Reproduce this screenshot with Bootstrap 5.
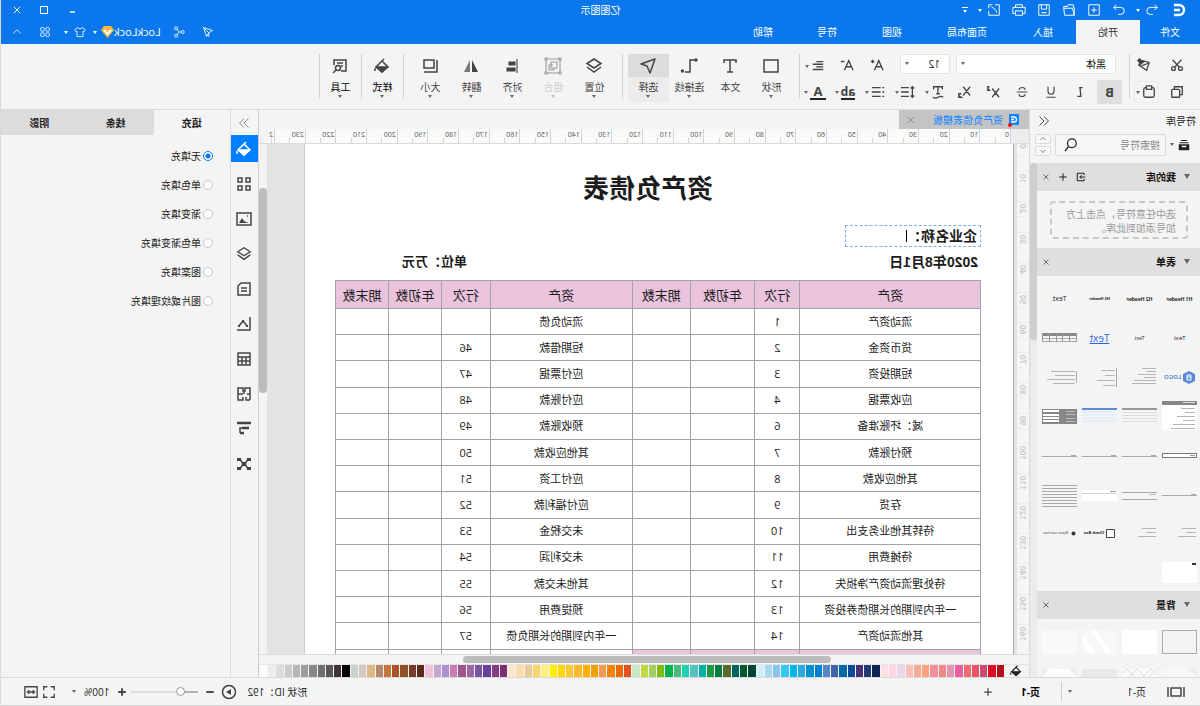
<!DOCTYPE html>
<html lang="zh-CN">
<head>
<meta charset="utf-8">
<meta name="viewport" content="width=device-width, initial-scale=1">
<title>亿图图示</title>
<link rel="stylesheet" href="https://cdn.jsdelivr.net/npm/bootstrap@5.3.0/dist/css/bootstrap.min.css">
<style>
:root{--blue:#0a78ec;--bg:#f4f4f4;--line:#dadada;--head:#dfdfdf;--ink:#444}
body{font:10px/14px "Open Sans","Noto Sans CJK SC",sans-serif;color:#222;background:var(--bg);overflow:hidden}
/* the whole window is shown as a mirror image */
.app{height:100vh;transform:scaleX(-1);background:var(--bg);border-right:1px solid var(--line);border-bottom:1px solid var(--line)}
button,input,select{font:inherit;color:inherit}
.ib{border:0;background:none;padding:0;display:inline-flex;align-items:center;justify-content:center;flex:none;color:inherit}
svg{flex:none;display:block}
.ic{width:16px;height:16px;fill:none;stroke:currentColor;stroke-width:1.5}
.s14{width:14px;height:14px}.s12{width:12px;height:12px}.s18{width:18px;height:18px}
.s10{width:10px;height:10px}.s8{width:8px;height:8px}
.thin{stroke-width:1.1}
.crt{width:0;height:0;border:2px solid transparent;border-top:3px solid #666;border-bottom:0;flex:none}
.top{background:var(--blue);color:#fff}
.top .crt{border-top-color:#fff}
.bar1{height:20px;display:grid;grid-template-columns:1fr auto 1fr}
.bar2{height:24px}
.w25{width:25px}.w29{width:29px}.w30{width:30px}
.mtab{color:#fff;text-decoration:none;line-height:24px;height:24px;padding:0;text-align:center}
.mtab.on{background:var(--bg);color:#333}
.user{font-size:11px}
.ribbon{height:66px;border-bottom:1px solid var(--line);color:var(--ink);padding-top:10px}
.sep{width:1px;height:45px;background:#d2d2d2;flex:none}
.fsel{height:20px;border:1px solid #e2e2e2;border-radius:2px;background:#fff;padding:0 9px;appearance:none;width:100%;color:#111}
.selw{position:relative}
.selw .crt{position:absolute;right:5px;top:8px}
.cell{height:24px}
.cell .crt{margin-left:2px}
.ab24{width:25px;background:#dedede;border-radius:2px}
.paste{width:25px;border:1px solid #ececec;border-radius:2px}
.big{width:41px;height:48px;flex-direction:column;justify-content:flex-start}
.big .pic{width:39px;height:23px;display:flex;align-items:center;justify-content:center}
.big .lb{line-height:14px;margin-top:3px}
.big .crt{margin-top:1px}
.big.on{background:#ececec;border-radius:2px}.big.on .pic{background:#dcdcdc;width:100%}
.big:disabled .lb{color:#ccc}.big:disabled{color:#999}.big:disabled .crt{border-top-color:#bbb}
.lib{width:170px;flex:none}
.libscroll{overflow:hidden;min-height:0}
.sechead{background:var(--head);height:28px;font-weight:700;color:#111;padding:0 5px 0 10px}
.tri{width:0;height:0;border:3px solid transparent;border-top:5px solid #666;border-bottom:0}
.drop{border:2px dashed #c8c8c8;border-radius:3px;height:38px;margin:10px 13px 9px 12px;padding:4px 0 0 10px;color:#999;line-height:14px}
.srch{height:22px;border:1px solid var(--line);border-radius:2px;background:#f7f7f7}
.srch input{border:0;background:none;outline:0;width:100%;padding:0 0 0 5px}
.srch input::placeholder{color:#888}
.updn{width:16px;height:10px;border:1px solid var(--line);border-radius:2px;background:#f8f8f8}
.thumbs{display:grid;grid-template-columns:repeat(4,35px);column-gap:5px;grid-auto-rows:39px;padding:4px 0 0 3px;height:315px}
.thumbs>div{display:flex;align-items:center;justify-content:center;white-space:nowrap;color:#222;font-size:6px}
.bgs{display:grid;grid-template-columns:repeat(4,35px);gap:15px 5px;grid-auto-rows:24px;padding:11px 0 0 3px}
.bgs svg{width:35px;height:24px}
.sb{width:7px;background:#ebebeb;flex:none}.sb div{height:177px;background:#cfcfcf;border-radius:3px}
.center{border-left:1px solid var(--line);border-right:1px solid #ccc;min-width:0}
.dtab{width:130px;height:19px;background:#c4c4c4;color:#0a84ff}
.dicon{position:relative;width:10px;height:11px;margin-right:6px}
.dicon i{position:absolute;left:7px;bottom:-2px;width:4px;height:4px;border-radius:50%;background:#f00}
.hrow{height:15px;border-bottom:1px solid var(--line)}
.hr{display:grid;grid-template-columns:repeat(24,1fr) 7px;font:7px/12px "Open Sans",sans-serif;color:#555;background:#fafafa;overflow:hidden}
.hr span{border-left:1px solid #d4d4d4;padding-left:1px;background:linear-gradient(#d4d4d4,#d4d4d4) 50% 100%/1px 5px no-repeat;overflow:hidden}
.vr{width:14px;display:grid;grid-template-rows:repeat(17,1fr);font:8px/12px "Open Sans",sans-serif;color:#333;background:#fafafa;margin-top:-3px}
.vr span{border-top:1px solid #d4d4d4;background:linear-gradient(#d4d4d4,#d4d4d4) 100% 50%/6px 1px no-repeat;display:flex;align-items:flex-start;min-height:0}
.vr b{font-weight:600;writing-mode:vertical-rl;transform:rotate(180deg);padding-bottom:2px}
.desk{background:#e3e3e3;padding:0 37px 0 3px;overflow:hidden;min-width:0}
.paper{background:#fff;border-left:1px solid #aaa;border-right:1px solid #ccc;padding:29px 30px 0 32px;height:100%;color:#1c1c1c}
.paper h1{font:700 26px/32px "Liberation Sans","Noto Sans CJK SC",sans-serif;padding-left:20px;margin:0 0 20px}
.co{border:1px dashed #7fb0e6;width:136px;height:22px;font-size:14px;font-weight:700;padding-left:3px}
.co i{width:1px;height:12px;background:#000}
.meta{font:700 14px/20px "Liberation Sans","Noto Sans CJK SC",sans-serif;margin:5px 0 8px;padding:0 67px 0 3px}
.meta .unit{font-size:13px}
.sheet{width:100%;height:396px;table-layout:fixed;border-collapse:collapse;font-size:11px;line-height:14px;text-align:center}
.sheet th,.sheet td{border:1px solid #a3a3a3;padding:0}
.sheet td{height:26px}
.sheet th{height:28px;background:#eac3dc;font-size:13px;font-weight:400}
.sheet .pk{background:#eac3dc}
.vs{width:9px;background:#f4f4f4;padding-top:44px}.vs div{width:8px;height:205px;background:#bcbcbc;border-radius:4px}
.hs{height:11px;border-top:1px solid var(--line);border-bottom:1px solid #e6e6e6;padding:1px 204px 1px 198px}.hs div{height:7px;background:#bcbcbc;border-radius:4px}
.pal{height:12px}
.pal .sw{flex:1;margin-right:1px;height:12px}
.tools{width:28px;flex:none;border-right:1px solid var(--line);color:#444}
.tools .ib{height:27px;width:100%;margin-bottom:8px}
.tools .fold{height:25px;margin:0;color:#777}
.tools .on{background:#0080ff;color:#fff}
.props{width:229px;flex:none}
.ptab{flex:1;border:0;background:#dcdcdc;height:25px;padding:0;font-weight:600}
.ptab.on{background:var(--bg);font-weight:700}
.rad{height:29px;gap:2px}
.rad input{appearance:none;width:10px;height:10px;border:1px solid #c4c4c4;border-radius:50%;background:#fff;margin:0}
.rad input:checked{border-color:#0a78ec;background:radial-gradient(#0a78ec 0 2px,#fff 3px)}
.stat{height:28px;border-top:1px solid var(--line);color:#222}
.stat .ic{color:#444}
.zoomr{appearance:none;width:67px;height:10px;background:linear-gradient(90deg,#b4b4b4 0 25%,#ddd 25%) center/100% 2px no-repeat;margin:0}
.zoomr::-webkit-slider-thumb{appearance:none;width:9px;height:9px;border-radius:50%;border:1px solid #999;background:#fff}
</style>
</head>
<body>
<svg width="0" height="0" class="position-absolute" aria-hidden="true"><defs>
<symbol id="undo" viewBox="0 0 16 16"><path d="M5 2 2 5l3 3M2 5h8a4 4 0 0 1 0 8H7"/></symbol>
<symbol id="redo" viewBox="0 0 16 16"><path d="m11 2 3 3-3 3M14 5H6a4 4 0 0 0 0 8h3"/></symbol>
<symbol id="new" viewBox="0 0 16 16"><path d="M2 2h12v12H2zM8 5v6M5 8h6"/></symbol>
<symbol id="open" viewBox="0 0 16 16"><path d="M2 14V5h1V2h6l1 2h4v2M2 14h11l1-8H4z"/></symbol>
<symbol id="save" viewBox="0 0 16 16"><path d="M2 2h12v12H2zM5 2v5h6V2M5 11h6"/></symbol>
<symbol id="print" viewBox="0 0 16 16"><path d="M4 5V2h8v3M4 12H1V5h14v7h-3M4 9h8v5H4z"/></symbol>
<symbol id="export" viewBox="0 0 16 16"><path d="M7 2H2v12h12V9M10 2h4v4M5 11c0-4 3-4 6-7"/></symbol>
<symbol id="send" viewBox="0 0 16 16"><path d="m2 6 12-4-4 12-3-5zM14 2 7 9v5l2-2"/></symbol>
<symbol id="share" viewBox="0 0 16 16"><circle cx="3" cy="8" r="2"/><circle cx="12" cy="3" r="2"/><circle cx="12" cy="13" r="2"/><path d="M5 8h3l2.500-4M8 8l2.500 4"/></symbol>
<symbol id="shirt" viewBox="0 0 16 16"><path d="M5 2 1 5l2 3 1-1v7h8V7l1 1 2-3-4-3c-1 2-5 2-6 0z"/></symbol>
<symbol id="clover" viewBox="0 0 16 16"><rect x="2" y="2" width="5" height="5" rx="2"/><rect x="9" y="2" width="5" height="5" rx="2"/><rect x="2" y="9" width="5" height="5" rx="2"/><rect x="9" y="9" width="5" height="5" rx="2"/></symbol>
<symbol id="up" viewBox="0 0 16 16"><path d="m3 10 5-5 5 5"/></symbol>
<symbol id="down" viewBox="0 0 16 16"><path d="m3 6 5 5 5-5"/></symbol>
<symbol id="x" viewBox="0 0 16 16"><path d="m3 3 10 10M13 3 3 13"/></symbol>
<symbol id="plus" viewBox="0 0 16 16"><path d="M8 2v12M2 8h12"/></symbol>
<symbol id="minus" viewBox="0 0 16 16"><path d="M2 8h12"/></symbol>
<symbol id="dbl" viewBox="0 0 16 16"><path d="M8 2 2 8l6 6M14 2 8 8l6 6"/></symbol>
<symbol id="dbr" viewBox="0 0 16 16"><path d="m2 2 6 6-6 6M8 2l6 6-6 6"/></symbol>
<symbol id="cut" viewBox="0 0 16 16"><circle cx="4" cy="12" r="2.200"/><circle cx="12" cy="12" r="2.200"/><path d="m3 2 7.500 8.500M13 2l-7.500 8.500"/></symbol>
<symbol id="brush" viewBox="0 0 16 16"><path d="m2 5 3 9 9-6-4-5z"/><path d="m8 4 3-1 2-2 2 2-2 2v3z" fill="currentColor"/><path d="m3 6 8 3" /></symbol>
<symbol id="copy" viewBox="0 0 16 16"><path d="M11 5V2H2v9h3"/><rect x="5" y="5" width="9" height="9" rx="1"/></symbol>
<symbol id="paste" viewBox="0 0 16 16"><rect x="2" y="3" width="12" height="11" rx="2"/><path d="M5 1h6v4H5z" fill="#f4f4f4"/></symbol>
<symbol id="italic" viewBox="0 0 16 16"><path d="M5 3h4M8 3l-1 10h4"/></symbol>
<symbol id="under" viewBox="0 0 16 16"><path d="M4 1v6a4 4 0 0 0 8 0V1M2 15h12"/></symbol>
<symbol id="strike" viewBox="0 0 16 16"><path d="M12 5c-1-4-8-4-8 0M1 8h14M4 11c0 4 8 4 8 0"/></symbol>
<symbol id="sup" viewBox="0 0 16 16"><path d="m1 4 8 10M9 4 1 14M12 2h2v2l-2 2h3" /></symbol>
<symbol id="sub" viewBox="0 0 16 16"><path d="m1 2 8 10M9 2 1 12M11 10h3v2l-3 2h4"/></symbol>
<symbol id="tt" viewBox="0 0 16 16"><path d="M3 5V2h10v3M8 2v8M6 10h4M2 14q3-2 6 0t6 0"/></symbol>
<symbol id="lsp" viewBox="0 0 16 16"><path d="M3 2v12M1 4l2-2 2 2M1 12l2 2 2-2M7 3h9M7 8h9M7 13h9"/></symbol>
<symbol id="bul" viewBox="0 0 16 16"><path d="M1 3h2M1 8h2M1 13h2M5 3h10M5 8h10M5 13h10"/></symbol>
<symbol id="align" viewBox="0 0 16 16"><path d="M2 3h8M2 6h12M2 9h8M2 12h12"/></symbol>
<symbol id="aup" viewBox="0 0 16 16"><path d="M1 14 6 3l5 11M3 10h6M11 4h4M13 2v4"/></symbol>
<symbol id="adn" viewBox="0 0 16 16"><path d="M1 14 6 3l5 11M3 10h6M11 4h4"/></symbol>
<symbol id="rect" viewBox="0 0 18 18"><path d="M2 3h14v12H2z"/></symbol>
<symbol id="text" viewBox="0 0 18 18"><path d="M3 6V3h12v3M9 3v12M6 15h6"/></symbol>
<symbol id="conn" viewBox="0 0 18 18"><path d="M2 3h6v12h5"/><circle cx="2" cy="3" r="1.700" fill="currentColor" stroke="none"/><circle cx="15.500" cy="14" r="1.700" fill="currentColor" stroke="none"/></symbol>
<symbol id="pick" viewBox="0 0 18 18"><path d="m2 2 14 5-6 2-3 7z" stroke-linejoin="round"/></symbol>
<symbol id="layers" viewBox="0 0 18 18"><path d="m9 2 7 4.500L9 11 2 6.500zM2 10l7 5 7-5"/></symbol>
<symbol id="group" viewBox="0 0 18 18"><path d="M2 2h14v14H2zM5 5h6v6H5zM9 8h4v5H8v-2"/><path d="M1 1h2v2H1zM15 1h2v2h-2zM1 15h2v2H1zM15 15h2v2h-2z" fill="#f4f4f4"/></symbol>
<symbol id="al" viewBox="0 0 18 18"><path d="M4 2v14"/><path d="M6 5h6v3H6zM6 11h8v3H6z" fill="currentColor"/></symbol>
<symbol id="flip" viewBox="0 0 18 18"><path d="M8 3v12H2z" fill="currentColor" stroke="none"/><path d="M10 3v12h6z" fill="#777" stroke="none"/></symbol>
<symbol id="size" viewBox="0 0 18 18"><path d="M5 3h10v8H5zM2 3v12h13"/></symbol>
<symbol id="fill" viewBox="0 0 16 16"><path d="m8 3 6 6-6 5-6-5zM8 3 6 1"/><path d="M3 9h10l-5 5z" fill="currentColor"/><path d="M15 10v3"/></symbol>
<symbol id="toolb" viewBox="0 0 16 16"><path d="M14 7V2H2v11h5M5 5h6M5 8h2"/><circle cx="10" cy="10" r="2.500"/><path d="m12 12 3 3"/></symbol>
<symbol id="shelf" viewBox="0 0 16 16"><path d="M1 7h14v8H1z" fill="currentColor" stroke="none"/><path d="M2 5h12M4 2h8"/><path d="M5 9h6v2H5z" fill="#fff" stroke="none"/></symbol>
<symbol id="mag" viewBox="0 0 16 16"><circle cx="7" cy="6" r="5"/><path d="m11 10 4 5"/></symbol>
<symbol id="imp" viewBox="0 0 16 16"><path d="M3 5V2h11v12H3v-3M1 8h9M7 5l3 3-3 3"/></symbol>
<symbol id="grid4" viewBox="0 0 16 16"><path d="M2 2h4v4H2zM10 2h4v4h-4zM2 10h4v4H2zM10 10h4v4h-4z"/></symbol>
<symbol id="img" viewBox="0 0 16 16"><path d="M1 2h14v12H1z"/><path d="m3 12 3-1 2-1 2-3 3 5z" fill="currentColor" stroke="none"/><path d="M4 5h1"/></symbol>
<symbol id="doc" viewBox="0 0 16 16"><path d="M2 2h9l3 3v9H2zM5 7h6M5 10h6"/></symbol>
<symbol id="chart" viewBox="0 0 16 16"><path d="M2 1v13h13M5 10l4-5 4 5"/><path d="M8 4h2v2H8zM4 9h2v2H4zM12 9h2v2h-2z" fill="currentColor" stroke="none"/></symbol>
<symbol id="tbl" viewBox="0 0 16 16"><path d="M2 2h12v12H2zM2 6h12M2 10h12M6 6v8M10 6v8"/></symbol>
<symbol id="puz" viewBox="0 0 16 16"><path d="M2 14V2h5v3h2V2h5v12H9v-3M2 14h4v-3M2 8h3M9 8h5M8 5v3"/></symbol>
<symbol id="gantt" viewBox="0 0 16 16"><path d="M1 2h14" stroke-width="2.500"/><path d="M3 7h7M8 12h4" stroke-width="2.500"/><path d="M12 12V7h-2"/></symbol>
<symbol id="mind" viewBox="0 0 16 16"><path d="M6 8h4M4 3l3 5-3 5M12 3 9 8l3 5"/><path d="M1 2h4v3H1zM11 2h4v3h-4zM1 11h4v3H1zM11 11h4v3h-4zM6 6h4v4H6z" fill="currentColor" stroke="none"/></symbol>
<symbol id="pages" viewBox="0 0 18 12"><path d="M1 1v10M17 1v10M4 2h10v8H4z"/></symbol>
<symbol id="play" viewBox="0 0 16 16"><circle cx="8" cy="8" r="6.500"/><path d="m6 5 5 3-5 3z" fill="currentColor" stroke="none"/></symbol>
<symbol id="full" viewBox="0 0 16 16"><path d="M2 6V2h4M10 2h4v4M14 10v4h-4M6 14H2v-4"/></symbol>
<symbol id="fit" viewBox="0 0 16 16"><path d="M1 2h14v12H1zM4 8h8M6 6 4 8l2 2M10 6l2 2-2 2"/></symbol>
</defs></svg>

<div class="app d-flex flex-column">
<header class="top flex-shrink-0">
  <div class="bar1">
    <div class="d-flex align-items-center" style="padding-left:14px">
      <svg width="13" height="14" viewBox="0 0 13 14" fill="none" stroke="#fff" stroke-width="2.500"><path d="M12 2H7a5 5 0 0 0 0 10h5M6 7h6"/></svg>
      <button class="ib w25 ms-2" aria-label="撤销"><svg class="ic thin s14"><use href="#undo"/></svg></button><span class="crt"></span>
      <button class="ib w25 ms-1" aria-label="重做"><svg class="ic thin s14"><use href="#redo"/></svg></button>
      <button class="ib w25" aria-label="新建"><svg class="ic thin s14"><use href="#new"/></svg></button>
      <button class="ib w25" aria-label="打开"><svg class="ic thin s14"><use href="#open"/></svg></button>
      <button class="ib w25" aria-label="保存"><svg class="ic thin s14"><use href="#save"/></svg></button>
      <button class="ib w25" aria-label="打印"><svg class="ic thin s14"><use href="#print"/></svg></button>
      <button class="ib w25" aria-label="导出"><svg class="ic thin s14"><use href="#export"/></svg></button><span class="crt"></span>
      <button class="ib w25" aria-label="更多"><svg width="6" height="7" viewBox="0 0 6 7"><path d="M0 0h6v1H0zM1 3h4L3 6z" fill="#fff"/></svg></button>
    </div>
    <div class="align-self-center">亿图图示</div>
    <div class="d-flex align-items-center justify-content-end pe-1">
      <button class="ib w29" aria-label="最小化"><svg class="ic s12"><path d="M4 8h5"/></svg></button>
      <button class="ib w29" aria-label="最大化"><svg width="8" height="8"><path d="M.5.5h7v7h-7z" fill="none" stroke="#fff"/></svg></button>
      <button class="ib w25" aria-label="关闭"><svg class="ic s10"><use href="#x"/></svg></button>
    </div>
  </div>
  <div class="bar2 d-flex align-items-center">
    <nav class="d-flex">
      <a class="mtab" href="#" style="width:60px">文件</a><a class="mtab on" href="#" style="width:64px">开始</a><a class="mtab" href="#" style="width:66px">插入</a><a class="mtab" href="#" style="width:86px">页面布局</a><a class="mtab" href="#" style="width:64px">视图</a><a class="mtab" href="#" style="width:66px">符号</a><a class="mtab" href="#" style="width:62px">帮助</a>
    </nav>
    <div class="d-flex align-items-center ms-auto pe-1" style="height:20px">
      <button class="ib w29" aria-label="发送"><svg class="ic thin s12"><use href="#send"/></svg></button>
      <button class="ib w29" aria-label="分享"><svg class="ic thin s12"><use href="#share"/></svg></button>
      <a href="#" class="user text-white text-decoration-none ms-1">LockLock</a>
      <svg width="13" height="12" viewBox="0 0 13 12"><path d="M3 0h7l3 4-6.500 8L0 4z" fill="#fdb640"/><path d="m3 4 3.500 4L10 4" stroke="#fff" stroke-width="2" fill="none"/></svg>
      <span class="crt ms-1"></span>
      <button class="ib w25" aria-label="主题"><svg class="ic thin s12"><use href="#shirt"/></svg></button><span class="crt"></span>
      <button class="ib w30 ms-1" aria-label="应用"><svg class="ic thin s12"><use href="#clover"/></svg></button>
      <button class="ib w25" aria-label="收起"><svg class="ic thin s12"><use href="#up"/></svg></button>
    </div>
  </div>
</header>

<div class="ribbon d-flex flex-shrink-0">
  <div style="width:70px;padding-left:8px">
    <div class="d-flex" style="height:22px"><button class="ib w29" aria-label="剪切"><svg class="ic s14"><use href="#cut"/></svg></button><button class="ib ms-1 w29" aria-label="格式刷"><svg class="ic s14"><use href="#brush"/></svg></button></div>
    <div class="d-flex align-items-center mt-1 cell"><button class="ib w29" aria-label="复制"><svg class="ic s14"><use href="#copy"/></svg></button><button class="ib ms-1 paste" style="height:22px" aria-label="粘贴"><svg class="ic s14"><use href="#paste"/></svg><span class="crt"></span></button></div>
  </div>
  <span class="sep"></span>
  <div style="width:329px;padding-left:5px">
    <div class="d-flex ps-2" style="height:22px">
      <div class="selw" style="width:160px"><select class="fsel" aria-label="字体"><option>黑体</option></select><span class="crt"></span></div>
      <div class="selw" style="width:50px;margin-left:6px"><select class="fsel" aria-label="字号"><option>12</option></select><span class="crt"></span></div>
      <button class="ib w30 ms-2" aria-label="增大字号"><svg class="ic s14"><use href="#aup"/></svg></button><button class="ib w30" aria-label="减小字号"><svg class="ic s14"><use href="#adn"/></svg></button>
      <button class="ib cell w30 ms-auto" aria-label="对齐"><svg class="ic s14"><use href="#align"/></svg><span class="crt"></span></button>
    </div>
    <div class="d-flex mt-1">
      <span class="w29 d-flex justify-content-center"><button class="ib cell ab24 fw-bold" style="font-size:13px">B</button></span><button class="ib cell w29" aria-label="斜体"><svg class="ic s14"><use href="#italic"/></svg></button><button class="ib cell w29" aria-label="下划线"><svg class="ic s12"><use href="#under"/></svg></button><button class="ib cell w29" aria-label="删除线"><svg class="ic s12"><use href="#strike"/></svg></button><button class="ib cell w29" aria-label="上标"><svg class="ic s14"><use href="#sup"/></svg></button><button class="ib cell w29" aria-label="下标"><svg class="ic s14"><use href="#sub"/></svg></button>
      <button class="ib cell w30" aria-label="大小写"><svg class="ic s14"><use href="#tt"/></svg><span class="crt"></span></button><button class="ib cell w30" aria-label="行距"><svg class="ic s14"><use href="#lsp"/></svg><span class="crt"></span></button><button class="ib cell w30" aria-label="项目符号"><svg class="ic s14"><use href="#bul"/></svg><span class="crt"></span></button>
      <button class="ib cell w30"><span class="fw-bold border-bottom border-2 border-dark" style="font-size:12px;line-height:13px">ab</span><span class="crt"></span></button><button class="ib cell w30"><span class="fw-bold border-bottom border-2 border-dark px-1" style="font-size:13px;line-height:13px">A</span><span class="crt"></span></button>
    </div>
  </div>
  <span class="sep"></span>
  <div class="d-flex" style="padding:0 5px 0 7px">
    <button class="ib big"><span class="pic"><svg class="ic s18"><use href="#rect"/></svg></span><span class="lb">形状</span><span class="crt"></span></button>
    <button class="ib big"><span class="pic"><svg class="ic s18"><use href="#text"/></svg></span><span class="lb">文本</span></button>
    <button class="ib big"><span class="pic"><svg class="ic s18"><use href="#conn"/></svg></span><span class="lb">连接线</span><span class="crt"></span></button>
    <button class="ib big on"><span class="pic"><svg class="ic s18"><use href="#pick"/></svg></span><span class="lb">选择</span><span class="crt"></span></button>
  </div>
  <span class="sep"></span>
  <div class="d-flex" style="padding:0 6px 0 7px">
    <button class="ib big"><span class="pic"><svg class="ic s18"><use href="#layers"/></svg></span><span class="lb">位置</span><span class="crt"></span></button>
    <button class="ib big" disabled><span class="pic"><svg class="ic thin s18"><use href="#group"/></svg></span><span class="lb">组合</span><span class="crt"></span></button>
    <button class="ib big"><span class="pic"><svg class="ic thin s18"><use href="#al"/></svg></span><span class="lb">对齐</span><span class="crt"></span></button>
    <button class="ib big"><span class="pic"><svg class="ic s18"><use href="#flip"/></svg></span><span class="lb">翻转</span><span class="crt"></span></button>
    <button class="ib big"><span class="pic"><svg class="ic s18"><use href="#size"/></svg></span><span class="lb">大小</span><span class="crt"></span></button>
  </div>
  <span class="sep"></span>
  <button class="ib big"><span class="pic"><svg class="ic"><use href="#fill"/></svg></span><span class="lb text-black">样式</span><span class="crt"></span></button>
  <span class="sep"></span>
  <button class="ib big"><span class="pic"><svg class="ic"><use href="#toolb"/></svg></span><span class="lb text-black">工具</span><span class="crt"></span></button>
  <span class="sep"></span>
</div>

<div class="d-flex flex-grow-1" style="min-height:0">
  <aside class="lib d-flex flex-column">
    <div class="d-flex align-items-center justify-content-between ps-1" style="height:22px;padding-right:8px"><span>符号库</span><button class="ib" aria-label="收起"><svg class="ic thin s12"><use href="#dbl"/></svg></button></div>
    <div class="d-flex align-items-center" style="height:32px;padding:0 5px 4px 10px">
      <svg class="ic s12"><use href="#shelf"/></svg><span class="crt mx-1"></span>
      <div class="srch d-flex align-items-center flex-grow-1 pe-2" style="min-width:0"><input aria-label="搜索符号" placeholder="搜索符号"><svg class="ic s14"><use href="#mag"/></svg></div>
      <div class="d-flex flex-column ms-1" style="gap:2px"><button class="ib updn" aria-label="上一个"><svg class="ic thin s8"><use href="#up"/></svg></button><button class="ib updn" aria-label="下一个"><svg class="ic thin s8"><use href="#down"/></svg></button></div>
    </div>
    <div class="d-flex flex-grow-1" style="min-height:0">
      <div class="libscroll flex-grow-1">
        <div class="sechead d-flex align-items-center gap-2"><span class="tri"></span><span class="me-auto">我的库</span><svg class="ic s10"><use href="#imp"/></svg><svg class="ic s10"><use href="#plus"/></svg><svg class="ic thin s8"><use href="#x"/></svg></div>
        <div class="drop">选中任意符号，点击上方<br>加号添加到此库。</div>
        <div class="sechead d-flex align-items-center gap-2"><span class="tri"></span><span class="me-auto">表单</span><svg class="ic thin s8"><use href="#x"/></svg></div>
        <div class="thumbs" id="thumbs">
          <div class="fw-bold" style="font-size:5px">H1 Header</div><div class="fw-bold" style="font-size:5px">H2 Header</div><div class="fw-bold" style="font-size:4px">H3 Header</div><div style="font-size:7px">Text</div>
          <div>Text</div><div style="font-size:5px">Text</div><div style="font-size:10px;color:#2a62f0;text-decoration:underline">Text</div><div data-t="table"></div>
          <div style="color:#5b8bd8;font-size:6px;font-weight:700"><svg width="12" height="13" viewBox="0 0 12 13"><path d="m6 0 6 3v7l-6 3-6-3V3z" fill="#5b8bd8"/><path d="M4 4h4v5H4zM4 6h4" stroke="#fff" fill="none"/></svg>&nbsp;LOGO</div><div data-t="lines6"></div><div data-t="lines4"></div><div data-t="cols"></div>
          <div data-t="form"></div><div data-t="strip"></div><div data-t="bstrip"></div><div data-t="dark"></div>
          <div data-t="field"></div><div data-t="rule"></div><div data-t="rule"></div><div data-t="rule"></div>
          <div data-t="rule"></div><div data-t="rule2"></div><div data-t="card"></div><div data-t="ruled"></div>
          <div data-t="lines3"></div><div data-t="lines3"></div><div class="fw-bold" style="font-size:4px;gap:2px"><svg width="9" height="9"><path d="M.5.5h8v8h-8z" fill="#fff" stroke="#444"/></svg>Check Box</div><div style="font-size:3px;gap:3px"><svg width="5" height="5"><circle cx="2.500" cy="2.500" r="2" fill="#333"/></svg>Report cover here</div>
          <div data-t="blank"></div>
        </div>
        <div class="sechead d-flex align-items-center gap-2"><span class="tri"></span><span class="me-auto">背景</span><svg class="ic thin s8"><use href="#x"/></svg></div>
        <div class="bgs">
          <svg viewBox="0 0 35 24"><path d="M.5.5h34v23H.5z" fill="#f3f3f3" stroke="#aaa"/></svg><svg viewBox="0 0 35 24"><path d="M0 0h35v24H0z" fill="#fff"/></svg><svg viewBox="0 0 35 24"><path d="M0 0h35v24H0z" fill="#f8f8f8"/><path d="M8 24 24 0M24 24 35 8" stroke="#fff" stroke-width="5"/></svg><svg viewBox="0 0 35 24"><path d="M0 0h35v24H0z" fill="#f9f9f9"/></svg>
          <svg viewBox="0 0 35 24"><path d="M0 0h35v24H0z" fill="#ececec"/><path d="M0 8 8 0h27v24H0z" fill="#f8f8f8"/></svg><svg viewBox="0 0 35 24"><path d="M0 0h35v24H0z" fill="#fbfbfb"/><path d="m0 6 6-6 12 12L30 0l5 5M0 0l10 10L20 0l12 12" stroke="#ddd" fill="none"/></svg><svg viewBox="0 0 35 24"><path d="M0 0h35v24H0z" fill="#e9e9e9"/></svg><svg viewBox="0 0 35 24"><path d="M0 0h35v24H0z" fill="#ececec"/><path d="M0 8 8 0h20l7 8v16H0z" fill="#fff"/></svg>
        </div>
      </div>
      <div class="sb"><div></div></div>
    </div>
  </aside>

  <main class="center flex-grow-1 d-flex flex-column">
    <div class="dtab d-flex align-items-center flex-shrink-0" style="padding:0 7px 0 10px"><span class="dicon"><svg width="10" height="11" viewBox="0 0 10 11"><rect width="10" height="11" rx="1" fill="#0a84ff"/><path d="M8 3H5a2.500 2.500 0 0 0 0 5h3M5 5.500h3" stroke="#fff" stroke-width="1.300" fill="none"/></svg><i></i></span><span class="me-auto">资产负债表模板</span><button class="ib text-secondary" aria-label="关闭标签"><svg class="ic thin s10"><use href="#x"/></svg></button></div>
    <div class="hrow d-flex flex-shrink-0"><div style="width:18px;background:#ececec"></div><div class="hr flex-grow-1" id="hr"></div><div style="width:9px"></div></div>
    <div class="d-flex flex-grow-1 overflow-hidden" style="min-height:0">
      <div class="vr" id="vr"></div>
      <div class="desk flex-grow-1"><div class="paper">
        <h1 class="text-center">资产负债表</h1>
        <div class="co d-flex align-items-center"><span>企业名称：</span><i></i></div>
        <div class="meta d-flex justify-content-between"><span>2020年8月1日</span><span class="unit">单位：万元</span></div>
        <table class="sheet"><colgroup><col style="width:28%"><col style="width:7%"><col style="width:10%"><col style="width:9%"><col style="width:22%"><col style="width:7.600%"><col style="width:8.200%"><col style="width:8.200%"></colgroup>
        <thead><tr><th>资产</th><th>行次</th><th>年初数</th><th>期末数</th><th>资产</th><th>行次</th><th>年初数</th><th>期末数</th></tr></thead><tbody id="rows"></tbody></table>
      </div></div>
      <div class="vs"><div></div></div>
    </div>
    <div class="hs flex-shrink-0"><div></div></div>
    <div class="d-flex flex-shrink-0"><span class="d-flex justify-content-center" style="width:25px"><svg class="ic s12"><use href="#fill"/></svg></span><div class="pal d-flex flex-grow-1" id="pal"></div></div>
  </main>

  <div class="tools">
    <button class="ib fold" aria-label="展开"><svg class="ic thin s12"><use href="#dbr"/></svg></button>
    <button class="ib on" aria-label="填充"><svg class="ic"><use href="#fill"/></svg></button>
    <button class="ib" aria-label="主题"><svg class="ic"><use href="#grid4"/></svg></button>
    <button class="ib" aria-label="图片"><svg class="ic"><use href="#img"/></svg></button>
    <button class="ib" aria-label="图层"><svg class="ic"><use href="#layers"/></svg></button>
    <button class="ib" aria-label="备注"><svg class="ic"><use href="#doc"/></svg></button>
    <button class="ib" aria-label="图表"><svg class="ic"><use href="#chart"/></svg></button>
    <button class="ib" aria-label="表格"><svg class="ic"><use href="#tbl"/></svg></button>
    <button class="ib" aria-label="组件"><svg class="ic"><use href="#puz"/></svg></button>
    <button class="ib" aria-label="甘特图"><svg class="ic"><use href="#gantt"/></svg></button>
    <button class="ib" aria-label="思维导图"><svg class="ic"><use href="#mind"/></svg></button>
  </div>
  <aside class="props">
    <div class="d-flex"><button class="ptab on">填充</button><button class="ptab">线条</button><button class="ptab">阴影</button></div>
    <div style="padding:6px 0 0 17px" id="rads"></div>
  </aside>
</div>

<footer class="stat d-flex align-items-center flex-shrink-0">
  <button class="ib" style="width:48px" aria-label="页面"><svg class="ic" style="width:18px;height:12px"><use href="#pages"/></svg></button>
  <button class="ib justify-content-between" style="width:84px;padding-left:6px">页-1<span class="crt"></span></button>
  <span style="width:1px;height:19px;background:#ccc;margin:0 21px 0 6px"></span>
  <a href="#" class="fw-bold text-black text-decoration-none">页-1</a>
  <button class="ib" aria-label="添加页" style="margin-left:28px"><svg class="ic s10" style="stroke-width:2"><use href="#plus"/></svg></button>
  <span class="ms-auto">形状 ID：192</span>
  <div class="d-flex align-items-center" style="padding:0 23px 0 10px">
    <button class="ib" aria-label="播放"><svg class="ic"><use href="#play"/></svg></button>
    <button class="ib" style="margin:0 7px 0 6px" aria-label="缩小"><svg class="ic s10" style="stroke-width:3"><use href="#minus"/></svg></button>
    <input type="range" class="zoomr" aria-label="缩放" value="24">
    <button class="ib ms-1" aria-label="放大"><svg class="ic s10" style="stroke-width:3"><use href="#plus"/></svg></button>
    <button class="ib ms-2 me-3 gap-1">100%<span class="crt ms-1"></span></button>
    <button class="ib me-1" aria-label="全屏"><svg class="ic s14"><use href="#full"/></svg></button>
    <button class="ib" aria-label="适应宽度"><svg class="ic s14"><use href="#fit"/></svg></button>
  </div>
</footer>
</div>

<script>
const $=id=>document.getElementById(id);
$('hr').innerHTML=Array.from({length:25},(_,i)=>`<span>${i<24?i*10:2}</span>`).join('');
$('vr').innerHTML=Array.from({length:17},(_,i)=>`<span><b>${i*10}</b></span>`).join('');
const L=['流动资产,1','货币资金,2','短期投资,3','应收票据,4','减：坏账准备,6','预付账款,7','其他应收款,8','存货,9','待转其他业务支出,10','待摊费用,11','待处理流动资产净损失,12','一年内到期的长期债券投资,13','其他流动资产,14'];
const R=['流动负债,','短期借款,46','应付票据,47','应付账款,48','预收账款,49','其他应收款,50','应付工资,51','应付福利款,52','未交税金,53','未交利润,54','其他未交款,55','预提费用,56','一年内到期的长期负债,57'];
$('rows').innerHTML=L.map((l,i)=>{const a=l.split(','),b=R[i].split(',');return `<tr><td>${a[0]}<td>${a[1]}<td><td><td>${b[0]}<td>${b[1]}<td><td></tr>`}).join('')+'<tr><td class="pk"><td class="pk"><td class="pk"><td class="pk"><td><td><td><td></tr>';
const C='b50e1c d60f26 c94b76 e95465 ea6b70 e8609c e196b4 f08a88 f3919b ffa37b f3ab96 f9bfbb ecd6e9 fdd5e5 ffe0e3 0f2350 253a72 48307b 0a4a94 0069a8 4063ae 5587c6 0080cf 0090d0 2ea8e0 00b6ee 33c8f5 8ec3ea a3d8ef d0ecf7 004438 00592f 00655e 576b2e 00803f 209640 00b0a5 54c1c0 1ccfb0 48bb7c 00b050 80bb10 a3cf66 c0d940 cde6c9 e6501f ef6a00 f08300 f39955 f0a000 ffb000 fdb733 fac832 ffd800 fff000 fff07c fdd270 eacb95 fcdcaa fce6d0 7d2f70 843c86 66409a 7855a0 9c66a0 a05588 cc7cb4 ab91d0 c5a5cb ebc2dc 5b2a1a 743d30 924e28 a9552b c0783f b78869 dfb887 d2c9c4 c9d2cb 000000 3c3532 595656 707070 888888 9d9f9f b4b6b5 caccca dcdcdc ededed ffffff'.split(' ');
$('pal').innerHTML=C.map(c=>`<div class="sw" style="background:#${c}"></div>`).join('');
$('rads').innerHTML=['无填充','单色填充','渐变填充','单色渐变填充','图案填充','图片或纹理填充'].map((t,i)=>`<div class="rad d-flex align-items-center"><input type="radio" name="f" id="r${i}"${i?'':' checked'}><label for="r${i}">${t}</label></div>`).join('');
const r=(x,y,w,h,f)=>`<rect x="${x}" y="${y}" width="${w}" height="${h}" fill="${f}"/>`;
const ln=(n,x,y0,s,f='#b5b5b5')=>Array.from({length:n},(_,i)=>r(x,y0+i*s,[14,10,18,12,22,24][i%6],1,f)).join('');
const T={
 table:()=>r(0,14,35,3,'#888')+[19,22].map(y=>r(0,y,35,1,'#aaa')).join('')+[0,7,14,20,27,34].map(x=>r(x,14,1,9,'#999')).join(''),
 lines6:()=>ln(6,1,10,3),lines4:()=>r(0,10,1,19,'#aaa')+ln(4,2,12,5),
 cols:()=>r(0,13,1,12,'#aaa')+ln(4,2,13,4)+ln(4,12,13,4),
 form:()=>r(0,5,35,28,'#fff')+r(0,4,35,4,'#888')+r(2,5,12,1,'#ddd')+ln(6,2,11,4),
 strip:()=>r(0,11,35,2,'#999')+[15,18,21,24].map(y=>r(0,y,35,1,'#ddd')).join(''),
 bstrip:()=>r(0,11,35,2,'#5b8bd8')+[14,17,20,23].map(y=>r(0,y,35,2,'#e4effa')).join(''),
 dark:()=>r(0,12,35,15,'#888')+[13,17,20,23].map(y=>r(18,y,16,2,'#fff')).join('')+[14,17,21,24].map(y=>r(2,y,9,1,'#bbb')).join(''),
 field:()=>r(0,17,35,5,'#777')+r(1,18,33,3,'#fff')+r(2,19,5,1,'#999'),
 rule:()=>r(0,20,35,1,'#aaa')+r(1,19,5,1,'#aaa'),rule2:()=>r(0,17,35,1,'#aaa')+r(0,24,35,1,'#aaa')+r(1,19,7,1,'#bbb'),
 card:()=>r(0,15,35,11,'#fff')+r(0,18,35,1,'#ccd6dc')+r(1,16,6,1,'#999'),
 ruled:()=>Array.from({length:8},(_,i)=>r(0,10+i*3,35,1,'#aaa')).join(''),
 lines3:()=>ln(3,1,14,4),blank:()=>r(0,9,35,21,'#fff')+r(1,10,4,2,'#333')};
document.querySelectorAll('[data-t]').forEach(e=>e.innerHTML=`<svg width="35" height="39">${T[e.dataset.t]()}</svg>`);
</script>
<script src="https://cdn.jsdelivr.net/npm/bootstrap@5.3.0/dist/js/bootstrap.bundle.min.js"></script>
</body>
</html>
